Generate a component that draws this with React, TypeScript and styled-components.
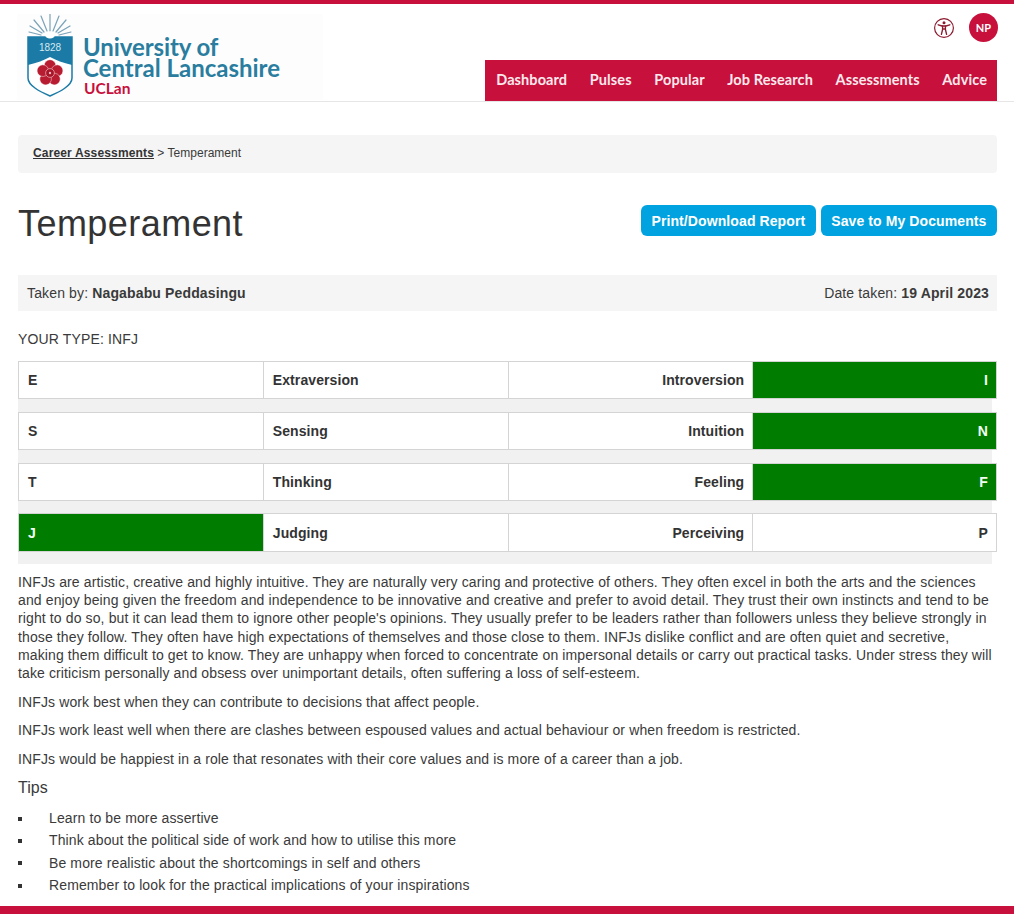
import React from "react"

import styled, { createGlobalStyle } from "styled-components"

const crimson = "#c8103c"
const rows = [
  { left: "E", leftName: "Extraversion", rightName: "Introversion", right: "I", picked: "right" },
  { left: "S", leftName: "Sensing", rightName: "Intuition", right: "N", picked: "right" },
  { left: "T", leftName: "Thinking", rightName: "Feeling", right: "F", picked: "right" },
  { left: "J", leftName: "Judging", rightName: "Perceiving", right: "P", picked: "left" },
]
const navItems = ["Dashboard", "Pulses", "Popular", "Job Research", "Assessments", "Advice"]
const tips = [
  "Learn to be more assertive",
  "Think about the political side of work and how to utilise this more",
  "Be more realistic about the shortcomings in self and others",
  "Remember to look for the practical implications of your inspirations",
]
const petals = [0, 72, 144, 216, 288]

const LogoMark = () => (
  <svg width="306" height="86" viewBox="0 0 306 86" fill="none">
    <g transform="translate(9 -1)">
      <g stroke="#7ba3b8" strokeWidth="1.2" strokeLinecap="round">
        <path d="M24 18V1" />
        <path d="M21 18L15 3" />
        <path d="M27 18L33 3" />
        <path d="M18 19L8 7" />
        <path d="M30 19L40 7" />
        <path d="M16 20L4 13" />
        <path d="M32 20L44 13" />
        <path d="M15 22L3 19" />
        <path d="M33 22L45 19" />
      </g>
      <path d="M2 24H46V65C46 73 33 79 24 83C15 79 2 73 2 65Z" fill="#fff" stroke="#1b7ba6" strokeWidth="1.5" />
      <path d="M2 24H46V52C37 50 30 47 24 44C18 47 11 50 2 52Z" fill="#1b7ba6" />
      <ellipse cx="24" cy="22" rx="5" ry="3.5" fill="#fff" />
      <text x="24" y="38" textAnchor="middle" fontFamily="'Liberation Sans', sans-serif" fontSize="10" fill="#d6e8f1">
        1828
      </text>
      <g fill="#b81c30" stroke="#fff" strokeWidth="0.4">
        {petals.map(angle => (
          <circle key={angle} cx="24" cy="52.5" r="5.8" transform={`rotate(${angle} 24 60)`} />
        ))}
      </g>
      <circle cx="24" cy="60" r="4.4" fill="#a81528" stroke="#e9b7bf" strokeWidth="0.7" />
      <circle cx="24" cy="60" r="1.2" fill="#e9b7bf" />
    </g>
    <LogoName x="66" y="42" letterSpacing="-0.1">
      University of
    </LogoName>
    <LogoName x="66" y="63">
      Central Lancashire
    </LogoName>
    <LogoShort x="67" y="80">
      UCLan
    </LogoShort>
  </svg>
)

const AccessIcon = () => (
  <svg width="22" height="22" viewBox="0 0 22 22" fill="none" stroke="#8c1b30" strokeWidth="1.2">
    <circle cx="11" cy="11" r="9.4" />
    <circle cx="11" cy="5.8" r="1.5" fill="#8c1b30" stroke="none" />
    <path d="M5.2 7.8L9 9H13L16.8 7.8" strokeWidth="1.4" strokeLinecap="round" />
    <path d="M9.6 9V12.5L8.4 17.4M12.4 9V12.5L13.6 17.4" strokeWidth="1.4" strokeLinecap="round" />
    <path d="M9.6 12H12.4" strokeWidth="1.4" />
  </svg>
)

const App = () => {
  return (
    <Page>
      <GlobalStyle />
      <Header>
        <Logo>
          <LogoMark />
        </Logo>
        <HeaderRight>
          <UserTools>
            <AccessIcon />
            <Avatar>NP</Avatar>
          </UserTools>
          <Nav>
            {navItems.map(item => (
              <NavLink key={item}>{item}</NavLink>
            ))}
          </Nav>
        </HeaderRight>
      </Header>
      <Main>
        <Breadcrumb>
          <CrumbLink>Career Assessments</CrumbLink> &gt; Temperament
        </Breadcrumb>
        <TitleRow>
          <Title>Temperament</Title>
          <Actions>
            <ActionButton>Print/Download Report</ActionButton>
            <ActionButton>Save to My Documents</ActionButton>
          </Actions>
        </TitleRow>
        <InfoBar>
          <span>
            Taken by: <strong>Nagababu Peddasingu</strong>
          </span>
          <span>
            Date taken: <strong>19 April 2023</strong>
          </span>
        </InfoBar>
        <YourType>YOUR TYPE: INFJ</YourType>
        <Scales>
          {rows.map(row => (
            <ScaleRow key={row.left}>
              <Cell $picked={row.picked === "left"}>{row.left}</Cell>
              <Cell>{row.leftName}</Cell>
              <Cell $right>{row.rightName}</Cell>
              <Cell $right $picked={row.picked === "right"}>
                {row.right}
              </Cell>
            </ScaleRow>
          ))}
        </Scales>
        <Paragraph>
          INFJs are artistic, creative and highly intuitive. They are naturally very caring and protective of others.
          They often excel in both the arts and the sciences and enjoy being given the freedom and independence to be
          innovative and creative and prefer to avoid detail. They trust their own instincts and tend to be right to do
          so, but it can lead them to ignore other people's opinions. They usually prefer to be leaders rather than
          followers unless they believe strongly in those they follow. They often have high expectations of themselves
          and those close to them. INFJs dislike conflict and are often quiet and secretive, making them difficult to
          get to know. They are unhappy when forced to concentrate on impersonal details or carry out practical tasks.
          Under stress they will take criticism personally and obsess over unimportant details, often suffering a loss
          of self-esteem.
        </Paragraph>
        <Paragraph>INFJs work best when they can contribute to decisions that affect people.</Paragraph>
        <Paragraph>
          INFJs work least well when there are clashes between espoused values and actual behaviour or when freedom is
          restricted.
        </Paragraph>
        <Paragraph>
          INFJs would be happiest in a role that resonates with their core values and is more of a career than a job.
        </Paragraph>
        <TipsTitle>Tips</TipsTitle>
        <TipList>
          {tips.map(tip => (
            <li key={tip}>{tip}</li>
          ))}
        </TipList>
      </Main>
      <FooterBar />
    </Page>
  )
}

const GlobalStyle = createGlobalStyle`
  html, body {
    margin: 0;
    padding: 0;
    background: #fff;
  }
  body {
    font-family: "Liberation Sans", Arial, sans-serif;
    font-size: 14px;
    color: #3a3a3a;
  }
`

const Page = styled.div`
  width: 1014px;
  height: 914px;
  display: flex;
  flex-direction: column;
  overflow: hidden;
  border-top: 4px solid ${crimson};
  box-sizing: border-box;
`

const Header = styled.header`
  height: 98px;
  flex: none;
  box-sizing: border-box;
  display: flex;
  justify-content: space-between;
  padding: 0 17px;
  border-bottom: 1px solid #e6e6e6;
`

const Logo = styled.div`
  width: 306px;
  height: 86px;
  margin-top: 10px;
  background: #fdfdfd;
`

const LogoName = styled.text`
  font-family: Lato, sans-serif;
  font-weight: 700;
  font-size: 24px;
  fill: #2a7d9f;
`

const LogoShort = styled.text`
  font-family: Lato, sans-serif;
  font-weight: 700;
  font-size: 15.5px;
  fill: ${crimson};
`

const HeaderRight = styled.div`
  display: flex;
  flex-direction: column;
  justify-content: space-between;
  align-items: flex-end;
`

const UserTools = styled.div`
  display: flex;
  align-items: center;
  gap: 14px;
  padding-top: 9px;
  margin-right: -1px;
`

const Avatar = styled.div`
  width: 29px;
  height: 29px;
  border-radius: 50%;
  background: ${crimson};
  color: #fff;
  font-family: Lato, sans-serif;
  font-weight: 700;
  font-size: 11px;
  display: flex;
  align-items: center;
  justify-content: center;
`

const Nav = styled.nav`
  display: flex;
  height: 41px;
  align-items: center;
  padding-bottom: 3px;
  box-sizing: border-box;
  background: ${crimson};
`

const NavLink = styled.a`
  padding: 0 11.3px;
  font-family: Lato, sans-serif;
  font-weight: 700;
  font-size: 14.5px;
  letter-spacing: 0.1px;
  color: #fbe9ed;
  white-space: nowrap;
  &:first-child {
    padding-left: 11px;
  }
  &:last-child {
    padding-right: 10px;
  }
`

const Main = styled.main`
  flex: 1;
  padding: 33px 17px 0 18px;
`

const Breadcrumb = styled.div`
  height: 38px;
  box-sizing: border-box;
  padding: 0 15px 2px;
  display: flex;
  align-items: center;
  white-space: pre;
  background: #f5f5f5;
  border-radius: 4px;
  font-size: 12px;
  letter-spacing: 0.02px;
`

const CrumbLink = styled.a`
  font-weight: 700;
  letter-spacing: 0.15px;
  color: #333;
  text-decoration: underline;
`

const TitleRow = styled.div`
  display: flex;
  justify-content: space-between;
  align-items: flex-start;
  height: 102px;
  padding-top: 32px;
  box-sizing: border-box;
`

const Title = styled.h1`
  margin: 1px 0 0;
  font-weight: 400;
  font-size: 36px;
  line-height: 36px;
  letter-spacing: 0.45px;
  color: #333;
`

const Actions = styled.div`
  display: flex;
  gap: 5px;
`

const ActionButton = styled.button`
  height: 31px;
  padding: 0 10.5px;
  border: 0;
  border-radius: 6px;
  background: #00a3e0;
  color: #fff;
  font-family: "Liberation Sans", Arial, sans-serif;
  font-weight: 700;
  font-size: 14px;
  letter-spacing: 0.1px;
`

const InfoBar = styled.div`
  height: 36px;
  box-sizing: border-box;
  padding: 0 8px 0 9px;
  display: flex;
  align-items: center;
  justify-content: space-between;
  background: #f5f5f5;
  letter-spacing: 0.14px;
`

const YourType = styled.div`
  margin: 20px 0 14px;
  line-height: 16px;
  letter-spacing: 0.14px;
`

const Scales = styled.div`
  width: 974px;
  padding-bottom: 12px;
  margin-bottom: -1px;
  display: flex;
  flex-direction: column;
  gap: 13px;
  background: #f1f1f1;
`

const ScaleRow = styled.div`
  width: 979px;
  display: grid;
  grid-template-columns: repeat(4, 1fr);
  height: 38px;
  background: #fff;
  &:last-child {
    height: 39px;
    margin-top: -1px;
  }
`

const Cell = styled.div<{ $right?: boolean; $picked?: boolean }>`
  box-sizing: border-box;
  display: flex;
  align-items: center;
  justify-content: ${props => (props.$right ? "flex-end" : "flex-start")};
  padding: 0 8px 0 9px;
  font-weight: 700;
  letter-spacing: 0.1px;
  border: 1px solid #d4d4d4;
  border-right-width: 0;
  background: ${props => (props.$picked ? "#007c00" : "#fff")};
  color: ${props => (props.$picked ? "#f2fff2" : "#333")};
  &:last-child {
    border-right-width: 1px;
  }
`

const Paragraph = styled.p`
  margin: 10px 0 0;
  line-height: 18.2px;
  letter-spacing: 0.12px;
  &:first-of-type {
    padding-bottom: 1px;
  }
`

const TipsTitle = styled.h3`
  margin: 10px 0 0;
  font-weight: 400;
  font-size: 16px;
  line-height: 20px;
`

const TipList = styled.ul`
  margin: 9px 0 0;
  padding: 0;
  list-style: none;
  line-height: 22.4px;
  letter-spacing: 0.12px;
  li {
    display: flex;
    align-items: center;
  }
  li::before {
    content: "";
    flex: none;
    width: 4px;
    height: 4px;
    margin: 1px 27px 0 0;
    background: #333;
  }
`

const FooterBar = styled.div`
  flex: none;
  height: 8px;
  background: ${crimson};
`

export default App
